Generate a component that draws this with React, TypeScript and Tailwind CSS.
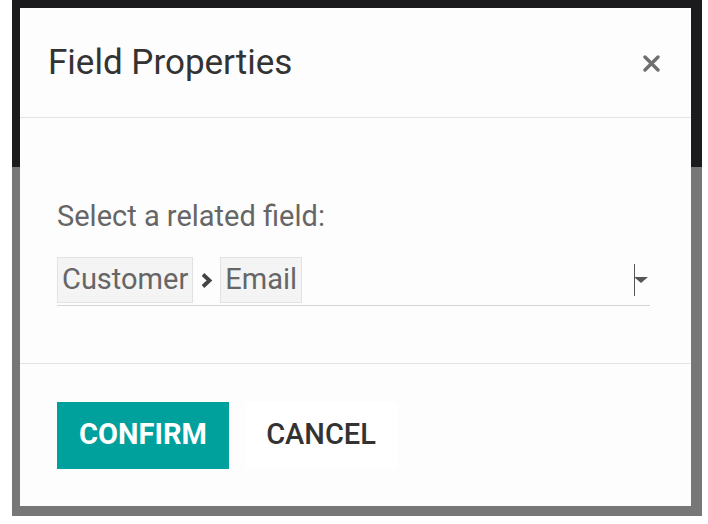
export default function App() {
  return (
    <div className="w-[708px] h-[524px] bg-white font-['Roboto','Liberation_Sans',sans-serif]">
      <div className="ml-[12px] w-[690px] h-[516px] pt-[8px] pl-[8px] bg-[linear-gradient(#1b1b1d_0,#1b1b1d_167px,#777777_167px,#777777_100%)]">
        <div className="w-[671px] h-[498px] bg-[#fdfdfd] flex flex-col">
          <div className="h-[110px] flex items-center justify-between pl-[28px] pr-[31px] border-b border-[#e3e3e3]">
            <h4 className="text-[35px] text-[#333] leading-none">Field Properties</h4>
            <svg width="17" height="17" viewBox="0 0 17 17" className="mt-[1px]">
              <path d="M2 2 L15 15 M15 2 L2 15" stroke="#6f6f6f" strokeWidth="3.4" strokeLinecap="round" />
            </svg>
          </div>
          <div className="h-[246px] pl-[37px] pr-[41px] pt-[84px] border-b border-[#e3e3e3]">
            <label className="block text-[29px] text-[#666] leading-none">Select a related field:</label>
            <div className="mt-[26px] flex items-center h-[49px] border-b border-[#d6d6d6] pb-[2px]">
              <span className="h-[46px] px-[4px] flex items-center bg-[#f4f4f4] border border-[#e2e2e2] text-[29px] text-[#666]">Customer</span>
              <svg width="13" height="17" viewBox="0 0 13 17" className="mx-[7px]">
                <path d="M3 2.5 L9.5 8.5 L3 14.5" fill="none" stroke="#444" strokeWidth="3.8" />
              </svg>
              <span className="h-[46px] px-[4px] flex items-center bg-[#f4f4f4] border border-[#e2e2e2] text-[29px] text-[#666]">Email</span>
              <span className="ml-auto mr-[2px] flex items-center h-[32px]">
                <span className="w-[1.5px] h-[32px] bg-[#555]" />
                <svg width="14" height="8" viewBox="0 0 14 8" className="-ml-[1px]">
                  <path d="M0 1 L14 1 L7 7 Z" fill="#555" />
                </svg>
              </span>
            </div>
          </div>
          <div className="flex-1 flex items-center gap-[16px] pl-[37px]">
            <button className="h-[67px] w-[172px] bg-[#00a09d] text-white text-[29px] font-bold">CONFIRM</button>
            <button className="h-[67px] w-[152px] bg-white text-[#333] text-[29px] font-medium">CANCEL</button>
          </div>
        </div>
      </div>
    </div>
  )
}
